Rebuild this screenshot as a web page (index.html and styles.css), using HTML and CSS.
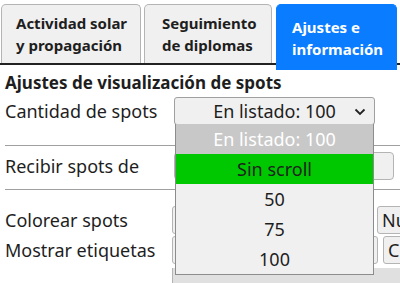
FILE: index.html
```html
<!DOCTYPE html>
<html lang="es">
<head>
  <meta charset="UTF-8" />
  <meta name="viewport" content="width=device-width, initial-scale=1.0"/>
  <title>Ajustes e información</title>
  <link rel="stylesheet" href="styles.css">
</head>
<body>
  <div class="tab-buttons">
    <button class="tab tab-solar">Actividad solar<br>y propagación</button>
    <button class="tab tab-diplomas">Seguimiento<br>de diplomas</button>
    <button class="tab tab-info active">Ajustes e<br>información</button>
  </div>

  <!-- Ajustes -->
  <div class="panel">
    <h3>Ajustes de visualización de spots</h3>

    <div class="row">
      <label>Cantidad de spots</label>
      <div class="select-wrap">
        <div class="select">
          <span>En listado: 100</span>
          <svg class="chevron" width="12" height="8" viewBox="0 0 12 8">
            <path d="M1.5 1.5 L6 6 L10.5 1.5" fill="none" stroke="#222" stroke-width="1.8"/>
          </svg>
        </div>
        <ul class="options">
          <li class="opt-current">En listado: 100</li>
          <li class="opt-hover">Sin scroll</li>
          <li>50</li>
          <li>75</li>
          <li>100</li>
        </ul>
      </div>
    </div>

    <hr class="sep-1">

    <div class="row row-recibir">
      <label>Recibir spots de</label>
      <input type="text" class="field">
    </div>

    <hr class="sep-2">

    <div class="row row-colorear">
      <label>Colorear spots</label>
      <div class="btn-group">
        <button class="btn btn-wide"></button>
        <button class="btn">Nunca</button>
      </div>
    </div>

    <div class="row row-mostrar">
      <label>Mostrar etiquetas</label>
      <div class="btn-group">
        <button class="btn btn-wider"></button>
        <button class="btn">Cerca</button>
      </div>
    </div>

    <div class="row row-extra">
      <label></label>
      <div class="bar"></div>
    </div>
  </div>
</body>
</html>
```

FILE: styles.css
```css
body {
  margin: 0;
  font-family: "Noto Sans", Arial, sans-serif;
  color: #1e1e1e;
  overflow: hidden;
}
.tab-buttons {
  display: flex;
  align-items: flex-start;
  gap: 3px;
  padding-left: 1px;
  border-bottom: 2px solid #222;
}
.tab {
  height: 59px;
  margin-top: 4px;
  padding: 0 0 0 14px;
  text-align: left;
  font-family: inherit;
  font-size: 15px;
  font-weight: bold;
  line-height: 22px;
  color: #1e1e1e;
  background: #f0f0f0;
  border: 1px solid #b4b4b4;
  border-bottom: none;
  border-radius: 5px 5px 0 0;
}
.tab-solar {
  width: 140px;
}
.tab-diplomas {
  width: 128px;
  padding-left: 17px;
}
.tab-info {
  width: 121px;
  margin-left: 1px;
  padding-left: 15px;
}
.tab.active {
  position: relative;
  height: 66px;
  margin-bottom: -7px;
  color: #fff;
  background: #0a7cff;
  border-color: #0a7cff;
}
.panel {
  padding: 0 0 0 5px;
}
h3 {
  margin: 7px 0 3px;
  font-size: 17px;
  line-height: 22px;
}
.row {
  display: flex;
  align-items: center;
  font-size: 18px;
}
.row label {
  width: 167px;
  flex: none;
}
.select-wrap {
  position: relative;
  width: 201px;
  margin-left: 2px;
}
.select {
  display: flex;
  align-items: center;
  justify-content: center;
  height: 26px;
  background: #f0f0f0;
  border: 1px solid #a0a0a0;
  border-radius: 3px;
  position: relative;
}
.chevron {
  position: absolute;
  right: 8px;
  top: 10px;
}
.options {
  position: absolute;
  top: 27px;
  left: 1px;
  z-index: 2;
  width: 197px;
  margin: 0;
  padding: 0;
  list-style: none;
  background: #f0f0f0;
  border: 1px solid #8c8c8c;
  border-top: none;
}
.options li {
  height: 30px;
  line-height: 31px;
  text-align: center;
}
.opt-current {
  color: #fff;
  background: #c8c8c8;
}
.opt-hover {
  background: #00c800;
  height: 31px;
}
hr {
  border: none;
  border-top: 1px solid #a0a0a0;
  margin: 0;
}
.sep-1 {
  margin-top: 20px;
}
.row-recibir {
  margin-top: 6px;
}
.field {
  width: 220px;
  height: 28px;
  box-sizing: border-box;
  margin-left: 2px;
  background: #f0f0f0;
  border: 1px solid #b4b4b4;
  border-radius: 4px;
}
.sep-2 {
  margin-top: 9px;
}
.row-colorear {
  margin-top: 16px;
}
.row-mostrar {
  margin-top: 2px;
}
.btn-group {
  display: flex;
  gap: 5px;
}
.btn {
  height: 28px;
  padding: 0 4px;
  font-family: inherit;
  font-size: 18px;
  color: #1e1e1e;
  background: #f0f0f0;
  border: 1px solid #b4b4b4;
  border-radius: 3px;
  white-space: nowrap;
}
.btn-wide {
  width: 200px;
}
.btn-wider {
  width: 206px;
}
.row-extra {
  margin-top: 4px;
}
.bar {
  width: 240px;
  height: 20px;
  background: #e0e0e0;
  border-left: 1px solid #b4b4b4;
}
```
